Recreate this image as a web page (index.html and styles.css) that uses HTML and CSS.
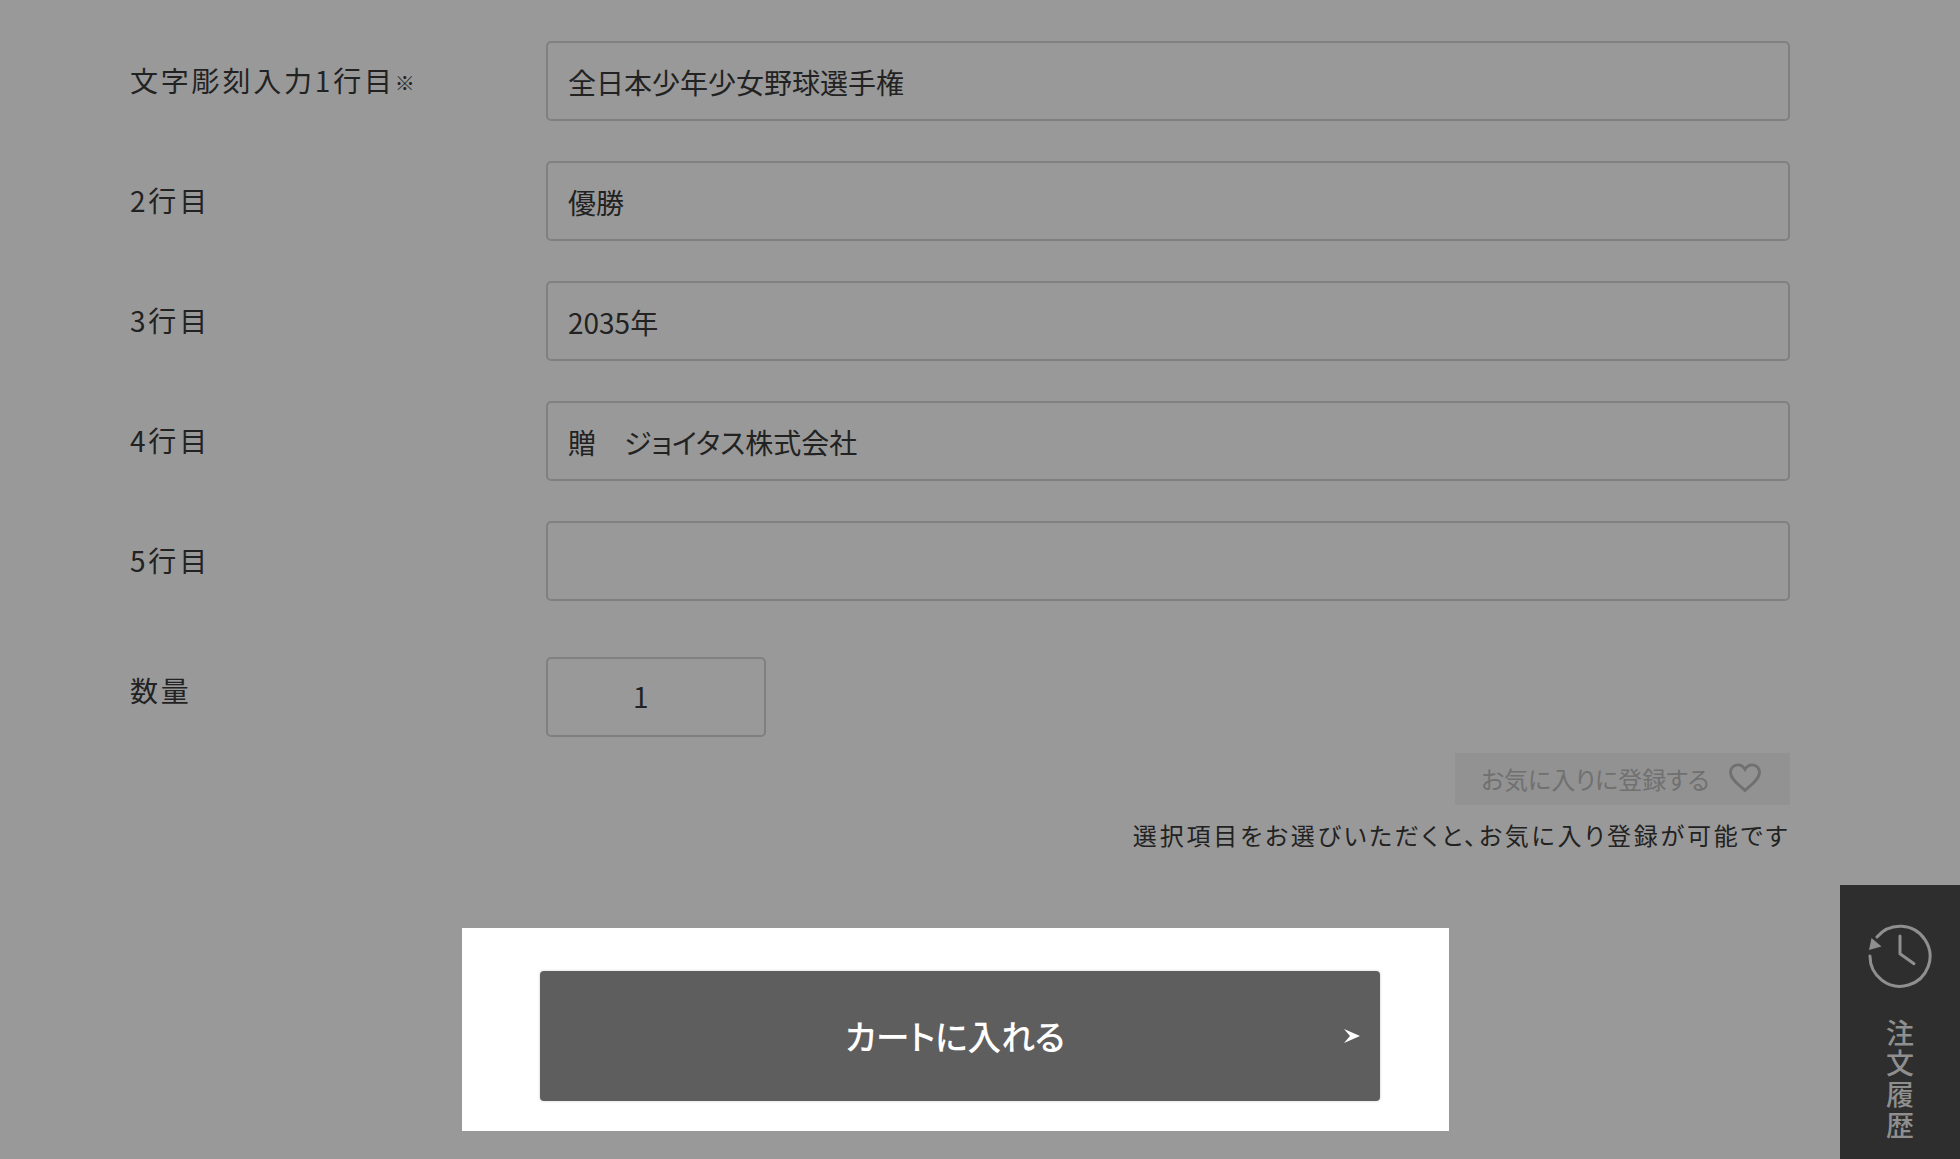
FILE: index.html
```html
<!DOCTYPE html>
<html lang="ja">
<head>
<meta charset="utf-8">
<title>カートに入れる</title>
<link rel="stylesheet" href="styles.css">
</head>
<body>
<main class="page">
  <form class="form">
    <div class="row">
      <label class="label">文字彫刻入力1行目<span class="mark">※</span></label>
      <input class="field" type="text" value="全日本少年少女野球選手権">
    </div>
    <div class="row">
      <label class="label">2行目</label>
      <input class="field" type="text" value="優勝">
    </div>
    <div class="row">
      <label class="label">3行目</label>
      <input class="field" type="text" value="2035年">
    </div>
    <div class="row">
      <label class="label">4行目</label>
      <input class="field" type="text" value="贈　ジョイタス株式会社">
    </div>
    <div class="row">
      <label class="label">5行目</label>
      <input class="field" type="text" value="">
    </div>
    <div class="row row-qty">
      <label class="label label-qty">数量</label>
      <input class="field field-qty" type="text" value="1">
    </div>
  </form>
  <div class="fav">
    <div class="fav-button">
      <span class="fav-text">お気に入りに登録する</span>
      <svg class="heart" viewBox="0 0 32 30" aria-hidden="true"><path d="M16 27.500C11 22.500 1.500 16.500 1.500 9.200 1.500 5 4.700 1.800 8.800 1.800c3 0 5.600 1.700 7.200 4.600 1.600-2.900 4.200-4.600 7.200-4.600 4.100 0 7.300 3.200 7.300 7.400C30.500 16.500 21 22.500 16 27.500Z"/></svg>
    </div>
    <p class="fav-note">選択項目をお選びいただくと、お気に入り登録が可能です</p>
  </div>
  <div class="cart-wrap">
    <button class="cart" type="button">
      <span class="cart-text">カートに入れる</span>
      <svg class="cart-arrow" viewBox="0 0 16 14" aria-hidden="true"><path d="M0 0 16 7 0 14 6 7Z"/></svg>
    </button>
  </div>
</main>
<aside class="history">
  <svg class="history-icon" viewBox="0 0 64 64" aria-hidden="true">
    <path class="clock-line" d="M2 32A30 30 0 1 0 9 13"/>
    <path class="clock-head" d="M1 26 3.500 14 13.500 22.500Z"/>
    <path class="clock-line" d="M32 12V29.700L46 39.700"/>
  </svg>
  <span class="history-text">注文履歴</span>
</aside>
</body>
</html>
```
FILE: styles.css
```css
* { box-sizing: border-box; }
html, body { margin: 0; height: 1159px; }
body {
  background: #999;
  color: #222;
  font-family: "Noto Sans CJK JP", "Noto Sans", sans-serif;
  overflow: hidden;
  position: relative;
}
.page { padding: 41px 170px 0 130px; }
.form { display: flex; flex-direction: column; gap: 40px; }
.row { display: flex; align-items: center; }
.label {
  width: 416px;
  flex: none;
  padding-bottom: 2px;
  font-size: 28px;
  letter-spacing: 2.800px;
  line-height: 40px;
  color: #222;
}
.mark { font-size: 20px; line-height: 1; vertical-align: 1px; }
.field {
  flex: 1;
  height: 80px;
  min-width: 0;
  padding: 1px 20px 0;
  background: transparent;
  border: 2px solid #808080;
  border-radius: 5px;
  font: 400 28px/40px "Noto Sans CJK JP", sans-serif;
  font-feature-settings: "palt";
  color: #222;
  outline: none;
}
.row-qty { margin-top: 16px; align-items: flex-start; }
.label-qty { padding-top: 13px; }
.field-qty { flex: none; width: 220px; padding: 0 0 3px 85px; }
.fav {
  display: flex;
  flex-direction: column;
  align-items: flex-end;
  margin-top: 16px;
}
.fav-button {
  display: flex;
  align-items: center;
  height: 52px;
  width: 335px;
  padding-left: 26px;
  gap: 20px;
  background: #929292;
  color: #707070;
  font-size: 24px;
  font-feature-settings: "palt";
}
.fav-text { padding-bottom: 2px; }
.heart { width: 32px; height: 30px; margin-top: -2px; fill: none; stroke: #707070; stroke-width: 2.800; }
.fav-note {
  margin: 12px 0 0;
  font-size: 24px;
  line-height: 36px;
  letter-spacing: 2.800px;
  font-feature-settings: "palt";
  color: #222;
}
.cart-wrap {
  width: 987px;
  height: 203px;
  margin: 75px 0 0 332px;
  padding: 43px 69px 0 78px;
  background: #fff;
}
.cart {
  position: relative;
  display: block;
  width: 840px;
  height: 130px;
  padding: 0 10px 0 0;
  border: 0;
  border-radius: 4px;
  background: #5e5e5e;
  color: #fff;
  font: 500 33.600px/48px "Noto Sans CJK JP", sans-serif;
  font-feature-settings: "palt";
  box-shadow: 0 0 3px rgba(0, 0, 0, .2);
}
.cart-arrow {
  position: absolute;
  right: 20px;
  top: 58px;
  width: 16px;
  height: 14px;
  fill: #fff;
}
.history {
  position: absolute;
  right: 0;
  bottom: 0;
  width: 120px;
  height: 274px;
  display: flex;
  flex-direction: column;
  align-items: center;
  padding-top: 39px;
  background: #2e2e2e;
  color: #8f8f8f;
}
.history-icon { width: 64px; height: 64px; }
.clock-line { fill: none; stroke: #8f8f8f; stroke-width: 3; stroke-linecap: round; stroke-linejoin: round; }
.clock-head { fill: #8f8f8f; }
.history-text {
  margin-top: 31px;
  writing-mode: vertical-rl;
  font-size: 28px;
  font-weight: 500;
  line-height: 30px;
  letter-spacing: 2.800px;
}
```
